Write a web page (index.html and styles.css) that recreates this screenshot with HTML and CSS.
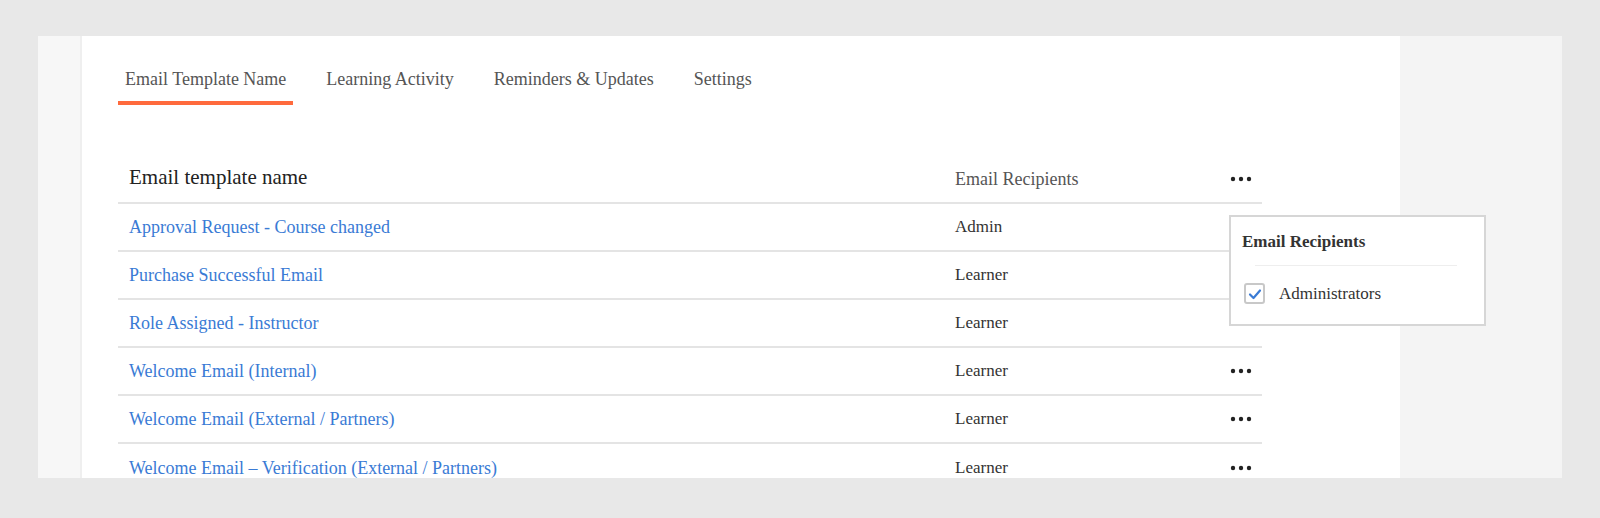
FILE: index.html
```html
<!DOCTYPE html>
<html>
<head>
<meta charset="utf-8">
<link rel="stylesheet" href="styles.css">
</head>
<body>
<div class="page">
  <div class="rail"></div>
  <main class="main">
    <nav class="tabs">
      <span class="tab active">Email Template Name</span>
      <span class="tab">Learning Activity</span>
      <span class="tab">Reminders &amp; Updates</span>
      <span class="tab">Settings</span>
    </nav>
    <div class="table">
      <div class="row head">
        <div class="cell name-h">Email template name</div>
        <div class="cell rec-h">Email Recipients</div>
        <div class="cell act"><svg class="dots" width="22" height="6" viewBox="0 0 22 6"><circle cx="3" cy="3" r="2.2"/><circle cx="11" cy="3" r="2.2"/><circle cx="19" cy="3" r="2.2"/></svg></div>
      </div>
      <div class="row">
        <div class="cell"><a class="link">Approval Request - Course changed</a></div>
        <div class="cell rec">Admin</div>
        <div class="cell act"></div>
      </div>
      <div class="row">
        <div class="cell"><a class="link">Purchase Successful Email</a></div>
        <div class="cell rec">Learner</div>
        <div class="cell act"></div>
      </div>
      <div class="row">
        <div class="cell"><a class="link">Role Assigned - Instructor</a></div>
        <div class="cell rec">Learner</div>
        <div class="cell act"></div>
      </div>
      <div class="row">
        <div class="cell"><a class="link">Welcome Email (Internal)</a></div>
        <div class="cell rec">Learner</div>
        <div class="cell act"><svg class="dots" width="22" height="6" viewBox="0 0 22 6"><circle cx="3" cy="3" r="2.2"/><circle cx="11" cy="3" r="2.2"/><circle cx="19" cy="3" r="2.2"/></svg></div>
      </div>
      <div class="row">
        <div class="cell"><a class="link">Welcome Email (External / Partners)</a></div>
        <div class="cell rec">Learner</div>
        <div class="cell act"><svg class="dots" width="22" height="6" viewBox="0 0 22 6"><circle cx="3" cy="3" r="2.2"/><circle cx="11" cy="3" r="2.2"/><circle cx="19" cy="3" r="2.2"/></svg></div>
      </div>
      <div class="row">
        <div class="cell"><a class="link">Welcome Email – Verification (External / Partners)</a></div>
        <div class="cell rec">Learner</div>
        <div class="cell act"><svg class="dots" width="22" height="6" viewBox="0 0 22 6"><circle cx="3" cy="3" r="2.2"/><circle cx="11" cy="3" r="2.2"/><circle cx="19" cy="3" r="2.2"/></svg></div>
      </div>
    </div>
  </main>
  <div class="side"></div>
  <div class="popover">
    <div class="pop-title">Email Recipients</div>
    <div class="pop-divider"></div>
    <label class="pop-item">
      <span class="check"><svg width="14" height="12" viewBox="0 0 14 12"><path d="M2 6.5 L5.5 10 L12 2.5" fill="none" stroke="#3a7bd5" stroke-width="2.2" stroke-linecap="round" stroke-linejoin="round"/></svg></span>
      <span>Administrators</span>
    </label>
  </div>
</div>
</body>
</html>
```

FILE: styles.css
```css
* { box-sizing: border-box; }
html, body { margin: 0; height: 100%; }
body {
  background: #e8e8e8;
  font-family: "Liberation Serif", "Times New Roman", serif;
  padding: 36px 0 0 38px;
}
.page {
  position: relative;
  width: 1524px;
  height: 442px;
  display: flex;
  overflow: hidden;
}
.rail {
  width: 44px;
  background: #f7f7f7;
  border-right: 2px solid #efefef;
  box-shadow: 1px 0 3px rgba(0,0,0,0.04);
}
.main {
  width: 1318px;
  background: #fff;
  padding-left: 36px;
}
.side {
  flex: 1;
  background: #f4f4f4;
}
.tabs {
  display: flex;
  gap: 26px;
  padding-top: 32px;
}
.tab {
  font-size: 18px;
  color: #555;
  padding: 0 7px;
  height: 37px;
  line-height: 23px;
  border-bottom: 4px solid transparent;
}
.tab.active {
  border-bottom-color: #ff6a3d;
}
.table {
  margin-top: 51px;
  width: 1144px;
}
.row {
  display: grid;
  grid-template-columns: 826px 276px 42px;
  height: 48px;
  align-items: center;
  border-bottom: 2px solid #e4e4e4;
}
.row:last-child { border-bottom: none; }
.cell { padding-left: 11px; }
.name-h { font-size: 21px; color: #222; padding-bottom: 4px; }
.rec-h { font-size: 18px; color: #555; }
.rec { font-size: 17px; color: #333; }
.link { font-size: 18px; color: #3a7bd5; text-decoration: none; }
.act { padding-left: 0; display: flex; justify-content: center; }
.dots { fill: #222; display: block; }
.popover {
  position: absolute;
  left: 1191px;
  top: 179px;
  width: 257px;
  height: 111px;
  background: #fff;
  border: 2px solid #d6d6d6;
  padding: 15px 0 0 11px;
}
.pop-title {
  font-weight: bold;
  font-size: 17px;
  color: #333;
}
.pop-divider {
  height: 1px;
  background: #eeeeee;
  margin: 13px 27px 0 13px;
}
.pop-item {
  display: flex;
  align-items: center;
  gap: 14px;
  margin-top: 17px;
  font-size: 17px;
  color: #333;
}
.check {
  width: 21px;
  height: 21px;
  border: 2px solid #c8c8c8;
  border-radius: 3px;
  display: flex;
  align-items: center;
  justify-content: center;
  margin-left: 2px;
}
```
